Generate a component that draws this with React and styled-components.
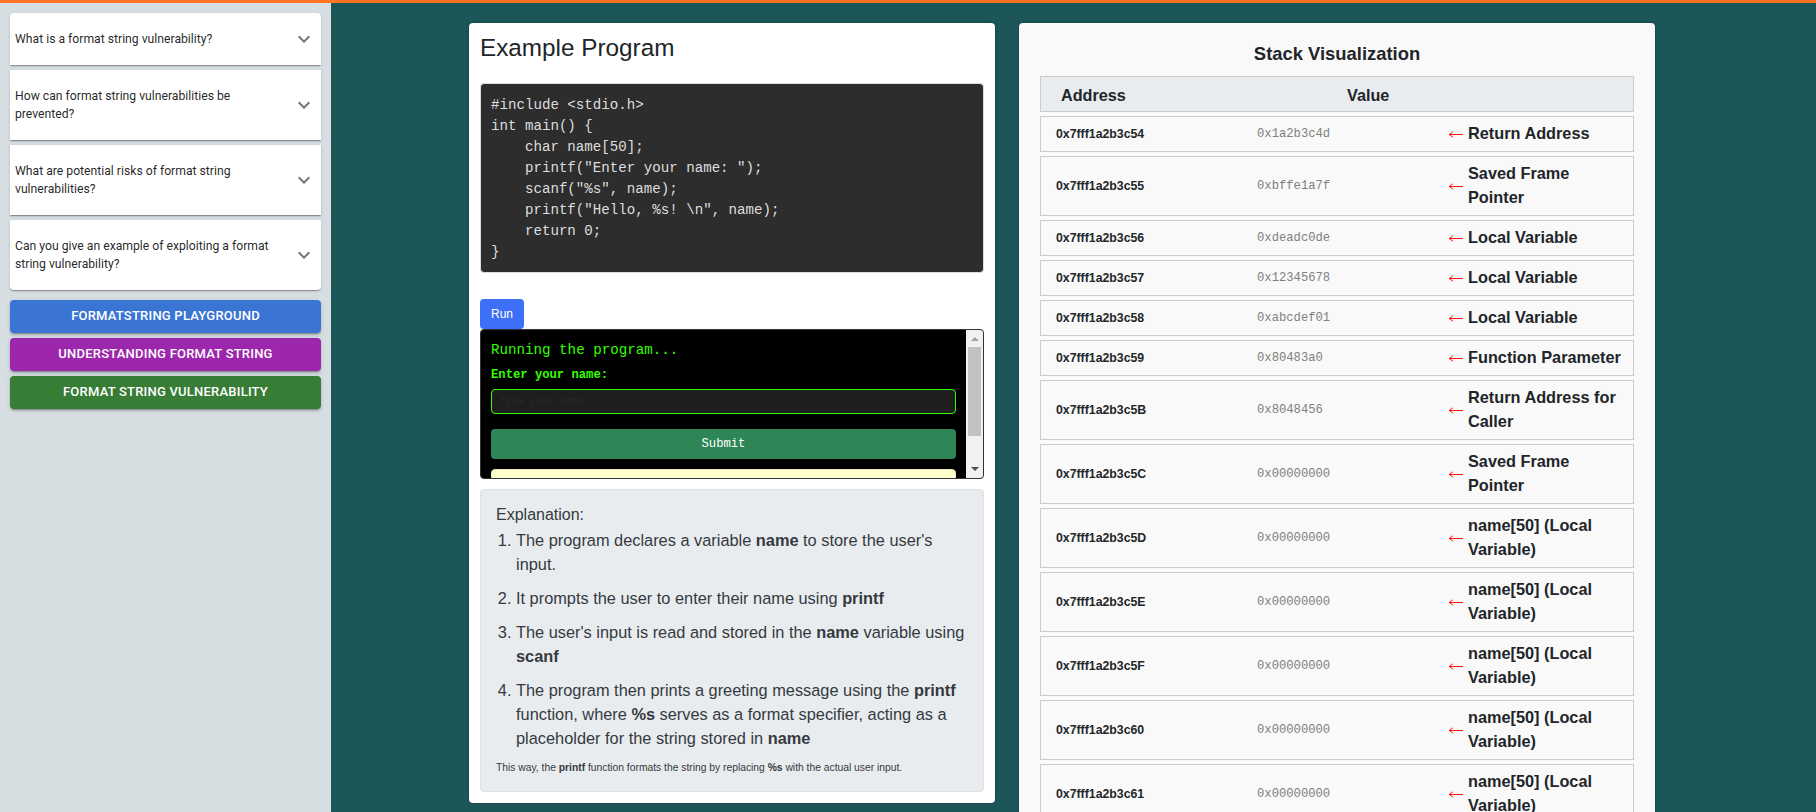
import React from "react";
import styled, { createGlobalStyle } from "styled-components";

const GlobalStyle = createGlobalStyle`
html, body {
  margin: 0;
  height: 100%;
  overflow: hidden;
}
body {
  font-family: "Liberation Sans", Arial, sans-serif;
  color: #212529;
}
* { box-sizing: border-box; }
`

const mono = `"Liberation Mono", "Courier New", monospace`;

const Page = styled.div`
height: 812px;
display: flex;
flex-direction: column;
overflow: hidden;
`

const TopBar = styled.div`
height: 3px;
flex: none;
background: #ff7425;
`

const Body = styled.div`
flex: 1;
min-height: 0;
display: flex;
`

const Sidebar = styled.aside`
width: 331px;
flex: none;
padding: 10px;
background: #d6dee1;
display: flex;
flex-direction: column;
`

const Question = styled.div`
min-height: ${(p) => (p.$tall ? 70 : 52)}px;
margin-bottom: 5px;
padding: 0 5px;
display: flex;
align-items: center;
justify-content: space-between;
background: #fff;
border-radius: ${(p) => (p.$first ? "4px 4px 0 0" : p.$last ? "0 0 4px 4px" : "0")};
box-shadow: 0 2px 1px -1px rgba(0, 0, 0, 0.2), 0 1px 1px rgba(0, 0, 0, 0.14), 0 1px 3px rgba(0, 0, 0, 0.12);
`

const QuestionText = styled.span`
width: 262px;
font-family: Roboto, sans-serif;
font-size: 12.2px;
line-height: 18px;
color: rgba(0, 0, 0, 0.87);
`

const Chevron = styled.svg`
width: 24px;
height: 24px;
flex: none;
fill: rgba(0, 0, 0, 0.54);
`

const NavButton = styled.button`
height: 33px;
margin-top: 5px;
padding: 0 0 2px;
border: 0;
border-radius: 4px;
background: ${(p) => p.$color};
color: #fff;
font-family: Roboto, sans-serif;
font-size: 13px;
font-weight: 500;
letter-spacing: 0.22px;
text-transform: uppercase;
box-shadow: 0 3px 1px -2px rgba(0, 0, 0, 0.2), 0 2px 2px rgba(0, 0, 0, 0.14), 0 1px 5px rgba(0, 0, 0, 0.12);
`

const Main = styled.main`
flex: 1;
min-width: 0;
padding: 20px 0 0 138px;
background: #1c5659;
display: flex;
align-items: flex-start;
gap: 24px;
`

const ProgramCard = styled.section`
width: 526px;
height: 780px;
flex: none;
padding: 0 11px;
background: #fff;
border-radius: 4px;
box-shadow: 0 0 3px rgba(0, 0, 0, 0.25);
`

const Heading = styled.h2`
margin: 0;
height: 60px;
padding-top: 9px;
font-size: 24.3px;
font-weight: 400;
line-height: 32px;
color: #212529;
`

const CodeBlock = styled.pre`
margin: 0;
height: 190px;
padding: 11px 10px 0;
background: #2d2d2d;
border: 1px solid #ddd;
border-radius: 4px;
font-family: ${mono};
font-size: 14.15px;
line-height: 21px;
color: #ddd;
`

const RunButton = styled.button`
display: block;
width: 44px;
height: 30px;
margin-top: 26px;
padding: 0;
border: 0;
border-radius: 4px;
background: #3d6ff8;
color: #fff;
font-family: "Liberation Sans", sans-serif;
font-size: 12px;
`

const Terminal = styled.div`
height: 150px;
display: flex;
background: #000;
border: 1px solid #333;
border-radius: 4px;
overflow: hidden;
`

const TerminalBody = styled.div`
flex: 1;
min-width: 0;
padding: 10px 10px 0;
display: flex;
flex-direction: column;
overflow: hidden;
font-family: ${mono};
`

const RunningLine = styled.div`
font-size: 14.2px;
line-height: 21px;
color: #33ff00;
`

const PromptLine = styled.div`
margin-top: 5px;
font-size: 12.2px;
font-weight: 700;
line-height: 18px;
color: #33ff00;
`

const NameInput = styled.input`
flex: none;
height: 25px;
margin-top: 5px;
padding: 0 8px;
background: #1e1e1e;
border: 1px solid #33ff00;
border-radius: 4px;
outline: none;
font-family: ${mono};
font-size: 10px;
&::placeholder {
  color: #282828;
}
`

const SubmitButton = styled.button`
flex: none;
height: 30px;
margin-top: 15px;
border: 0;
border-radius: 4px;
background: #2e8657;
color: #fff;
font-family: ${mono};
font-size: 12.2px;
`

const OutputBox = styled.div`
flex: none;
height: 40px;
margin-top: 10px;
background: #ffffcc;
border: 1px solid #e6e6b8;
border-radius: 4px;
`

const Scrollbar = styled.div`
width: 17px;
flex: none;
padding: 0 2px;
background: #f1f1f1;
display: flex;
flex-direction: column;
align-items: center;
`

const ScrollArrow = styled.div`
width: 0;
height: 0;
flex: none;
margin: ${(p) => (p.$down ? "0" : "7px 0 6px")};
border-left: 4px solid transparent;
border-right: 4px solid transparent;
${(p) => (p.$down ? "border-top: 4px solid #505050;" : "border-bottom: 4px solid #a3a3a3;")}
`

const ScrollThumb = styled.div`
width: 13px;
height: 89px;
flex: none;
margin-bottom: 31px;
background: #c1c1c1;
`

const Explanation = styled.div`
height: 303px;
margin-top: 10px;
padding: 13px 15px 0;
background: #e9ecef;
border: 1px solid #dee2e6;
border-radius: 4px;
color: #343a40;
`

const ExplanationTitle = styled.div`
font-size: 16px;
line-height: 24px;
`

const Steps = styled.ol`
margin: 1px 0 0;
padding: 0 0 0 20px;
font-size: 16.35px;
line-height: 24px;
`

const Step = styled.li`
margin-bottom: 10px;
`

const Footnote = styled.p`
margin: 10px 0 0;
font-size: 10.3px;
line-height: 15px;
`

const StackCard = styled.section`
width: 636px;
height: 900px;
flex: none;
padding: 0 21px;
background: #f9f9f9;
border-radius: 4px;
box-shadow: 0 0 3px rgba(0, 0, 0, 0.25);
`

const StackTitle = styled.h3`
margin: 0;
height: 53px;
padding-top: 19px;
text-align: center;
font-size: 18.4px;
font-weight: 700;
line-height: 24px;
color: #212529;
`

const HeaderRow = styled.div`
height: 36px;
margin-bottom: 4px;
padding-top: 2px;
display: flex;
align-items: center;
background: #e9ecef;
border: 1px solid #ccc;
font-size: 16.2px;
font-weight: 700;
color: #212529;
`

const HeaderCell = styled.div`
width: ${(p) => p.$width}px;
padding-left: 20px;
`

const Row = styled.div`
margin-bottom: 4px;
padding: 5px 5px 5px 15px;
display: grid;
grid-template-columns: 201px 191px 1fr;
align-items: center;
border: 1px solid #ccc;
`

const Address = styled.div`
font-size: 12.3px;
font-weight: 700;
color: #212529;
`

const Value = styled.div`
font-family: ${mono};
font-size: 12.2px;
color: #808080;
`

const Note = styled.div`
display: flex;
align-items: center;
gap: 5px;
`

const Arrow = styled.svg`
width: 15px;
height: 7px;
flex: none;
fill: none;
stroke: #ff1a0d;
stroke-width: 1;
`

const NoteText = styled.span`
margin: -1px 0 1px;
font-size: 16.3px;
font-weight: 700;
line-height: 24px;
color: #212529;
`

const questions = [
    "What is a format string vulnerability?",
    "How can format string vulnerabilities be prevented?",
    "What are potential risks of format string vulnerabilities?",
    "Can you give an example of exploiting a format string vulnerability?",
];

const code = `#include <stdio.h>
int main() {
    char name[50];
    printf("Enter your name: ");
    scanf("%s", name);
    printf("Hello, %s! \\n", name);
    return 0;
}`;

const stack = [
    ["0x7fff1a2b3c54", "0x1a2b3c4d", "Return Address"],
    ["0x7fff1a2b3c55", "0xbffe1a7f", "Saved Frame Pointer"],
    ["0x7fff1a2b3c56", "0xdeadc0de", "Local Variable"],
    ["0x7fff1a2b3c57", "0x12345678", "Local Variable"],
    ["0x7fff1a2b3c58", "0xabcdef01", "Local Variable"],
    ["0x7fff1a2b3c59", "0x80483a0", "Function Parameter"],
    ["0x7fff1a2b3c5B", "0x8048456", "Return Address for Caller"],
    ["0x7fff1a2b3c5C", "0x00000000", "Saved Frame Pointer"],
    ["0x7fff1a2b3c5D", "0x00000000", "name[50] (Local Variable)"],
    ["0x7fff1a2b3c5E", "0x00000000", "name[50] (Local Variable)"],
    ["0x7fff1a2b3c5F", "0x00000000", "name[50] (Local Variable)"],
    ["0x7fff1a2b3c60", "0x00000000", "name[50] (Local Variable)"],
    ["0x7fff1a2b3c61", "0x00000000", "name[50] (Local Variable)"],
];

export default function App() {
    return (
        <Page>
            <GlobalStyle />
            <TopBar />
            <Body>
                <Sidebar>
                    {questions.map((q, i) => (
                        <Question key={q} $tall={i > 0} $first={i === 0} $last={i === questions.length - 1}>
                            <QuestionText>{q}</QuestionText>
                            <Chevron viewBox="0 0 24 24">
                                <path d="M16.59 8.59 12 13.17 7.41 8.59 6 10l6 6 6-6z" />
                            </Chevron>
                        </Question>
                    ))}
                    <NavButton $color="#3a75d3">Formatstring Playground</NavButton>
                    <NavButton $color="#9c27ad">Understanding Format String</NavButton>
                    <NavButton $color="#377d36">Format String Vulnerability</NavButton>
                </Sidebar>
                <Main>
                    <ProgramCard>
                        <Heading>Example Program</Heading>
                        <CodeBlock>{code}</CodeBlock>
                        <RunButton type="button">Run</RunButton>
                        <Terminal>
                            <TerminalBody>
                                <RunningLine>Running the program...</RunningLine>
                                <PromptLine>Enter your name:</PromptLine>
                                <NameInput placeholder="Type your name" />
                                <SubmitButton type="button">Submit</SubmitButton>
                                <OutputBox />
                            </TerminalBody>
                            <Scrollbar>
                                <ScrollArrow />
                                <ScrollThumb />
                                <ScrollArrow $down />
                            </Scrollbar>
                        </Terminal>
                        <Explanation>
                            <ExplanationTitle>Explanation:</ExplanationTitle>
                            <Steps>
                                <Step>The program declares a variable <b>name</b> to store the user's input.</Step>
                                <Step>It prompts the user to enter their name using <b>printf</b></Step>
                                <Step>The user's input is read and stored in the <b>name</b> variable using <b>scanf</b></Step>
                                <Step>The program then prints a greeting message using the <b>printf</b> function, where <b>%s</b> serves as a format specifier, acting as a placeholder for the string stored in <b>name</b></Step>
                            </Steps>
                            <Footnote>This way, the <b>printf</b> function formats the string by replacing <b>%s</b> with the actual user input.</Footnote>
                        </Explanation>
                    </ProgramCard>
                    <StackCard>
                        <StackTitle>Stack Visualization</StackTitle>
                        <HeaderRow>
                            <HeaderCell $width={286}>Address</HeaderCell>
                            <HeaderCell $width={100}>Value</HeaderCell>
                        </HeaderRow>
                        {stack.map(([address, value, note]) => (
                            <Row key={address}>
                                <Address>{address}</Address>
                                <Value>{value}</Value>
                                <Note>
                                    <Arrow viewBox="0 0 15 7">
                                        <path d="M15 3.5H1M5 .8 1.2 3.5 5 6.2" />
                                    </Arrow>
                                    <NoteText>{note}</NoteText>
                                </Note>
                            </Row>
                        ))}
                    </StackCard>
                </Main>
            </Body>
        </Page>
    );
}
